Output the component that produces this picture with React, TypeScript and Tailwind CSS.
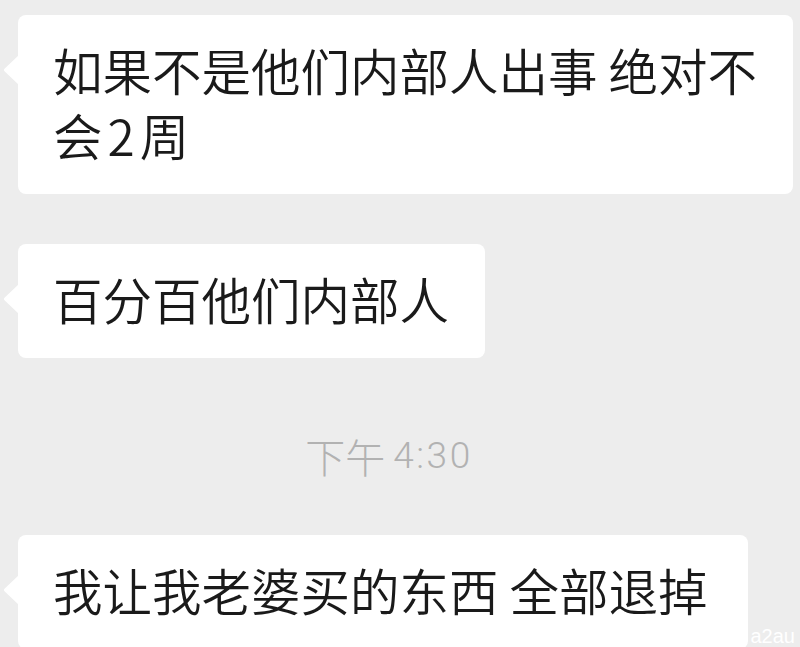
import React from "react";

const cjk = { fontFamily: '"Noto Sans CJK SC", "Noto Sans", sans-serif' };

function Tail() {
  return (
    <svg
      className="absolute left-[-15px] top-[40px]"
      width="16"
      height="30"
      viewBox="0 0 16 30"
    >
      <path d="M16 0 L16 30 L1.5 16.2 Q0 15 1.5 13.8 Z" fill="#ffffff" />
    </svg>
  );
}

function Bubble({ children, className = "" }: { children: React.ReactNode; className?: string }) {
  return (
    <div
      className={`relative self-start rounded-lg bg-white pl-[35px] pr-[36px] pt-[22px] pb-[27px] text-[49.5px] font-[350] leading-[65px] text-[#1a1a1a] whitespace-nowrap ${className}`}
      style={cjk}
    >
      <Tail />
      {children}
    </div>
  );
}

export default function App() {
  return (
    <div className="relative h-[647px] w-[800px] overflow-hidden bg-[#ededed]">
      <div className="flex flex-col pl-[18px] pt-[15px]">
        <Bubble className="w-[775px]">
          如果不是他们内部人出事 绝对不
          <br />
          会<span className="mx-[5px]">2</span>周
        </Bubble>
        <div className="h-[50px]" />
        <Bubble>百分百他们内部人</Bubble>
        <div className="mt-[73px] flex h-[50px] items-center justify-center pr-[40px] text-[#b2b2b2]">
          <span className="text-[40px] font-light leading-[50px]" style={cjk}>
            下午
          </span>
          <span
            className="ml-[8px] text-[37px] font-light leading-[50px] tracking-[2.5px]"
            style={{ fontFamily: 'Roboto, sans-serif' }}
          >
            4:30
          </span>
        </div>
        <div className="h-[54px]" />
        <Bubble className="pr-[40px]">我让我老婆买的东西 全部退掉</Bubble>
      </div>
      <div
        className="absolute bottom-[1px] right-[5px] text-[20px] leading-[20px] text-white"
        style={{ fontFamily: '"Liberation Sans", sans-serif' }}
      >
        a2au
      </div>
    </div>
  );
}
